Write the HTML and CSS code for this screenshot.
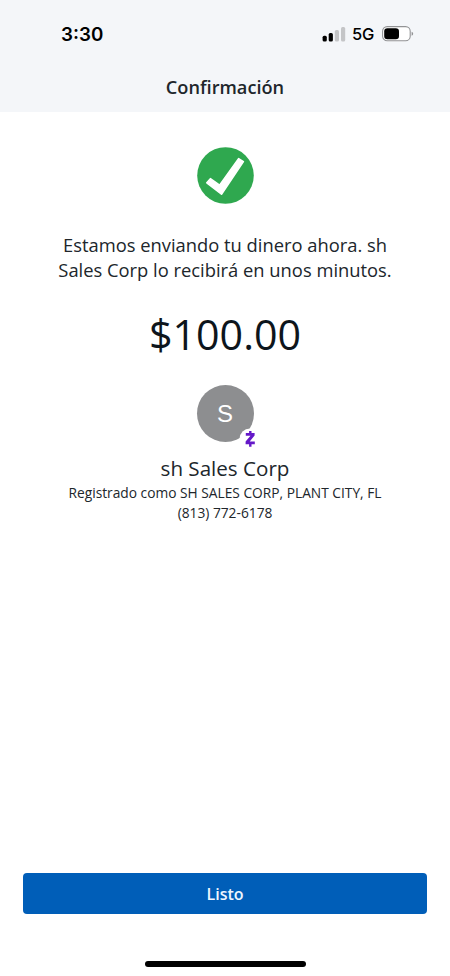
FILE: index.html
```html
<!DOCTYPE html>
<html lang="es">
<head>
<meta charset="utf-8">
<title>Confirmación</title>
<link rel="stylesheet" href="styles.css">
</head>
<body>
<div class="screen">
  <header class="header">
    <div class="status">
      <span class="time">3:30</span>
      <div class="indicators">
        <svg class="signal" width="23" height="15" viewBox="0 0 23 15">
          <rect x="0.6" y="8.8" width="4.2" height="5.7" rx="1.5" fill="#000"/>
          <rect x="6.7" y="6" width="4.2" height="8.5" rx="1.5" fill="#000"/>
          <rect x="12.8" y="3" width="4.2" height="11.5" rx="1.5" fill="#c4c5c7"/>
          <rect x="19" y="0" width="4.2" height="14.5" rx="1.5" fill="#c4c5c7"/>
        </svg>
        <span class="network">5G</span>
        <svg class="battery" width="32" height="16" viewBox="0 0 32 16">
          <rect x=".6" y=".6" width="27.6" height="14.2" rx="4.6" fill="#fff" stroke="#929395" stroke-width="1.1"/>
          <rect x="2.2" y="2.2" width="14.8" height="11" rx="3.2" fill="#000"/>
          <path d="M29.6 5.7q1.6.6 1.6 2t-1.6 2z" fill="#929395"/>
        </svg>
      </div>
    </div>
    <h1 class="title">Confirmación</h1>
  </header>
  <main class="content">
    <svg class="check" width="57" height="57" viewBox="0 0 57 57">
      <circle cx="28.5" cy="28.5" r="28.3" fill="#2fa84f"/>
      <path d="M9.8 35.8L13.4 31.7L22.6 38.1L41.6 11.6L46.4 14.6L24.5 47.2Z" fill="#fff" stroke="#fff" stroke-width="1.6" stroke-linejoin="round"/>
    </svg>
    <p class="message">Estamos enviando tu dinero ahora. sh<br>Sales Corp lo recibirá en unos minutos.</p>
    <p class="amount">$100.00</p>
    <div class="avatar">S
      <svg class="zelle" width="20" height="22" viewBox="0 0 20 22">
        <circle cx="10" cy="11" r="10.5" fill="#fff"/>
        <path d="M5.8 5H14.6V7.6L9.7 13.4H14.8V16.2H5.6V13.6L10.5 7.8H5.8Z" fill="#6418c8"/>
        <path d="M10.3 3V6M10.3 15.5V18.8" fill="none" stroke="#6418c8" stroke-width="2.4"/>
      </svg>
    </div>
    <h2 class="name">sh Sales Corp</h2>
    <p class="detail registered">Registrado como SH SALES CORP, PLANT CITY, FL</p>
    <p class="detail phone">(813) 772-6178</p>
  </main>
  <footer class="footer">
    <button class="done">Listo</button>
    <div class="home"></div>
  </footer>
</div>
</body>
</html>
```
FILE: styles.css
```css
* { box-sizing: border-box; }
body {
  margin: 0;
  background: #fff;
  color: #20262b;
  font-family: "Open Sans", sans-serif;
}
h1, h2, p { margin: 0; font-weight: 400; }
svg { display: block; overflow: visible; }
.screen { height: 976px; display: flex; flex-direction: column; }
.header { height: 112px; background: #f4f6f9; }
.status {
  height: 68px;
  padding: 0 36px 0 61px;
  display: flex;
  align-items: center;
  justify-content: space-between;
  color: #000;
  font-family: Inter, sans-serif;
}
.time { font-size: 18.8px; font-weight: 600; }
.indicators { display: flex; align-items: center; }
.network { margin: 0 8px 0 7px; font-size: 16.5px; font-weight: 500; letter-spacing: -.3px; }
.battery { margin-top: -1px; }
.title {
  margin-top: 6px;
  text-align: center;
  font-size: 18.2px;
  line-height: 26px;
  font-weight: 600;
}
.content {
  flex: 1;
  display: flex;
  flex-direction: column;
  align-items: center;
  padding-top: 35px;
  text-align: center;
  white-space: nowrap;
}
.check { margin-top: -.5px; }
.message { margin-top: 28.5px; font-size: 18.35px; line-height: 25px; }
.amount { margin-top: 24px; font-size: 41.2px; line-height: 56px; color: #0d151c; }
.avatar {
  position: relative;
  width: 57px;
  height: 57px;
  margin-top: 23px;
  border-radius: 50%;
  background: #8d8e90;
  color: #fff;
  font: 24px/58px "Liberation Sans", sans-serif;
}
.zelle { position: absolute; left: 43px; top: 43px; }
.name { margin-top: 12px; font-size: 20.6px; line-height: 28px; }
.registered { margin-top: 1px; }
.detail { font-size: 13.75px; line-height: 20px; }
.footer { display: flex; flex-direction: column; align-items: center; padding: 0 23px 9px; }
.done {
  width: 100%;
  height: 41px;
  border: 0;
  border-radius: 4px;
  background: #005eb8;
  color: #eef6ff;
  font: 600 16px/41px "Open Sans", sans-serif;
}
.home { width: 161px; height: 6px; margin-top: 47px; border-radius: 3px; background: #000; }
```
